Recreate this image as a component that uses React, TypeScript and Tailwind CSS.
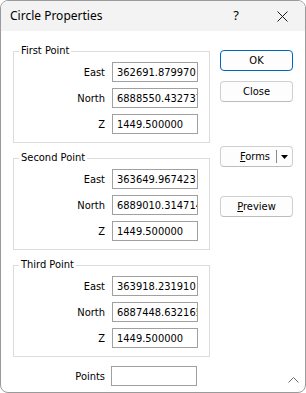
import React from "react";

const uiFont = { fontFamily: '"DejaVu Sans Condensed", "Liberation Sans", sans-serif' };

function Field({ label, value }: { label: string; value: string }) {
  return (
    <div className="flex items-center h-[20px]">
      <div className="w-[91px] text-right text-[11px] leading-none text-black">{label}</div>
      <div className="ml-[7px] w-[86px] h-[20px] border border-[#a0a0a0] bg-white overflow-hidden flex items-center pl-[4px] pr-[1px]">
        <span className="text-[11px] leading-none text-black whitespace-nowrap">{value}</span>
      </div>
    </div>
  );
}

function Group({ title, rows }: { title: string; rows: [string, string][] }) {
  return (
    <div className="relative border border-[#dcdcdc] pt-[10px] pb-[8px] pr-[10px] flex flex-col gap-[6px]">
      <span className="absolute -top-[8px] left-[5px] bg-white px-[2px] text-[11px] leading-[14px] text-black">{title}</span>
      {rows.map(([l, v]) => (
        <Field key={l} label={l} value={v} />
      ))}
    </div>
  );
}

function Btn({ children, primary, className = "" }: { children: React.ReactNode; primary?: boolean; className?: string }) {
  return (
    <div
      className={
        "h-[21px] w-[73px] rounded-[4px] bg-[#fdfdfd] flex items-center justify-center text-[11px] leading-none text-black " +
        (primary ? "border border-[#0067c0] " : "border border-[#d0d0d0] border-b-[#bcbcbc] ") +
        className
      }
    >
      {children}
    </div>
  );
}

export default function App() {
  return (
    <div
      className="w-[306px] h-[393px] bg-white border border-[#9a9a9a] rounded-[8px] overflow-hidden flex flex-col relative"
      style={uiFont}
    >
      <div className="h-[30px] bg-[#f3f3f3] flex items-center pl-[9px] shrink-0">
        <span className="text-[12px] text-black" style={{ fontFamily: '"Noto Sans", "Open Sans", sans-serif' }}>
          Circle Properties
        </span>
        <div className="ml-auto flex h-full">
          <div
            className="w-[46px] h-full flex items-center justify-center text-[13px] text-black"
            style={{ fontFamily: '"Noto Sans", sans-serif' }}
          >
            ?
          </div>
          <div className="w-[46px] h-full flex items-center justify-center">
            <svg width="11" height="11" viewBox="0 0 11 11">
              <path d="M0.5 0.5 L10.5 10.5 M10.5 0.5 L0.5 10.5" stroke="#1a1a1a" strokeWidth="1" fill="none" />
            </svg>
          </div>
        </div>
      </div>

      <div className="flex pl-[12px] pt-[20px]">
        <div className="w-[197px] flex flex-col">
          <Group
            title="First Point"
            rows={[
              ["East", "362691.879970"],
              ["North", "6888550.432737"],
              ["Z", "1449.500000"],
            ]}
          />
          <div className="mt-[15px]">
            <Group
              title="Second Point"
              rows={[
                ["East", "363649.967423"],
                ["North", "6889010.314714"],
                ["Z", "1449.500000"],
              ]}
            />
          </div>
          <div className="mt-[15px]">
            <Group
              title="Third Point"
              rows={[
                ["East", "363918.231910"],
                ["North", "6887448.632165"],
                ["Z", "1449.500000"],
              ]}
            />
          </div>
          <div className="mt-[9px] flex items-center h-[20px]">
            <div className="w-[92px] text-right text-[11px] leading-none text-black">Points</div>
            <div className="ml-[6px] w-[86px] h-[20px] border border-[#a0a0a0] bg-white" />
          </div>
        </div>

        <div className="ml-[10px] w-[73px] flex flex-col">
          <Btn primary className="-mt-px">OK</Btn>
          <Btn className="mt-[10px]">Close</Btn>
          <Btn className="mt-[44px] justify-end pr-[4px]">
            <span>
              <span className="underline">F</span>orms
            </span>
            <span className="ml-[6px] w-px h-[13px] bg-[#8a8a8a]" />
            <svg className="ml-[4px]" width="7" height="4" viewBox="0 0 7 4">
              <path d="M0 0 L7 0 L3.5 4 Z" fill="#000" />
            </svg>
          </Btn>
          <Btn className="mt-[29px]">
            <span>
              <span className="underline">P</span>review
            </span>
          </Btn>
        </div>
      </div>

      <svg className="absolute right-[6px] bottom-[9px]" width="11" height="6" viewBox="0 0 11 6">
        <path d="M0.5 5.5 L5.5 0.5 L10.5 5.5" stroke="#6a6a6a" strokeWidth="1" fill="none" />
      </svg>
    </div>
  );
}
